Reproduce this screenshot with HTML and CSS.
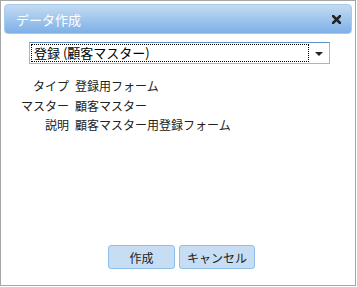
FILE: index.html
```html
<!DOCTYPE html>
<html lang="ja">
<head>
    <meta charset="UTF-8">
    <title>データ作成</title>
    <link rel="stylesheet" href="styles.css">
</head>
<body>
    <div class="dialog">
        <div class="titlebar">
            <span class="title">データ作成</span>
            <span class="close">
                <svg width="9" height="9" viewBox="0 0 9 9">
                    <path d="M1 1 L8 8 M8 1 L1 8" stroke="#222" stroke-width="2.6" stroke-linecap="square"/>
                </svg>
            </span>
        </div>

        <div class="content">
            <div class="select">
                <span class="select-text">登録 (顧客マスター)</span>
                <span class="select-arrow"></span>
            </div>

            <table class="info">
                <tr>
                    <th>タイプ</th>
                    <td>登録用フォーム</td>
                </tr>
                <tr>
                    <th>マスター</th>
                    <td>顧客マスター</td>
                </tr>
                <tr>
                    <th>説明</th>
                    <td>顧客マスター用登録フォーム</td>
                </tr>
            </table>
        </div>

        <div class="buttons">
            <button class="btn">作成</button>
            <button class="btn">キャンセル</button>
        </div>
    </div>
</body>
</html>
```

FILE: styles.css
```css
body {
    margin: 0;
    font-family: "Noto Sans CJK JP", "Liberation Sans", sans-serif;
    font-size: 12px;
    color: #222;
    background: #fff;
}

.dialog {
    width: 348px;
    height: 278px;
    padding: 3px;
    border: 1px solid #a6a6a6;
    display: flex;
    flex-direction: column;
}

/* title bar */
.titlebar {
    height: 28px;
    border: 1px solid #a9c9ec;
    border-radius: 4px;
    background: linear-gradient(#c3dbf2, #7db0e7);
    display: flex;
    align-items: center;
    justify-content: space-between;
    padding: 0 10px 0 11px;
}

.title {
    color: #fff;
    font-size: 13px;
}

.close {
    display: flex;
    margin-top: 1px;
}

.content {
    flex: 1;
    padding: 8px 0 0 25px;
}

/* fake select box */
.select {
    width: 298px;
    height: 20px;
    border: 1px solid #8fbbe4;
    border-top-color: #5f94c8;
    display: flex;
    align-items: center;
    padding-left: 1px;
}

.select-text {
    flex: 1;
    height: 16px;
    line-height: 16px;
    border: 1px dotted #000;
    padding-left: 2px;
    font-size: 13px;
    color: #000;
}

.select-arrow {
    width: 0;
    height: 0;
    margin: 1px 6px 0 6px;
    border-left: 4px solid transparent;
    border-right: 4px solid transparent;
    border-top: 4px solid #222;
}

.info {
    border-collapse: collapse;
    margin-top: 12px;
    margin-left: -25px;
}

.info th {
    width: 65px;
    text-align: right;
    font-weight: normal;
    padding: 0;
    height: 19.5px;
}

.info td {
    padding: 0 0 0 6px;
}

/* buttons */
.buttons {
    display: flex;
    justify-content: center;
    gap: 4px;
    padding: 0 0 13px 7px;
}

.btn {
    height: 24px;
    padding: 0 7px;
    min-width: 67px;
    border: 1px solid #8ebfe9;
    border-radius: 3px;
    background: #c6ddf3;
    font-family: "Noto Sans CJK JP", sans-serif;
    font-size: 12px;
    color: #222;
}
```
